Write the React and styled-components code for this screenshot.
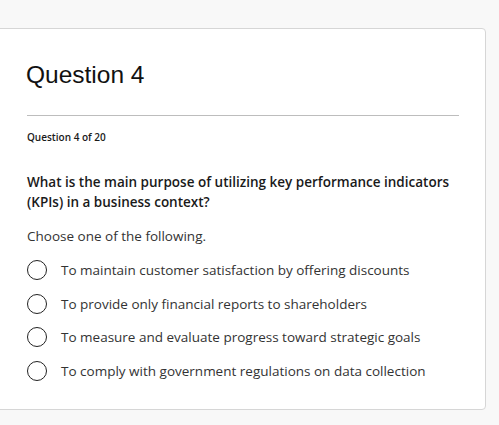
import React from 'react'
import styled, { createGlobalStyle } from 'styled-components'

const Global = createGlobalStyle`
  html, body {
    margin: 0;
    padding: 0;
    background: #f8f8f8;
  }
`

const Page = styled.div`
  width: 499px;
  height: 425px;
  padding-top: 28px;
  box-sizing: border-box;
`

const Card = styled.div`
  margin-left: -4px;
  width: 490px;
  height: 382px;
  box-sizing: border-box;
  background: #fff;
  border: 1px solid #d6d6d6;
  border-radius: 4px;
  padding: 0 26px 0 30px;
`

const Title = styled.h1`
  margin: 0 0 0 -1px;
  padding-top: 30px;
  font-family: 'Liberation Sans', Arial, sans-serif;
  font-weight: 400;
  font-size: 24.5px;
  line-height: 32px;
  color: #111;
`

const Divider = styled.hr`
  margin: 24px 0 0;
  border: none;
  border-top: 1px solid #bdbdbd;
`

const Counter = styled.div`
  margin-top: 13px;
  font-family: 'Open Sans', sans-serif;
  font-weight: 600;
  font-size: 10px;
  line-height: 16px;
  color: #1a1a1a;
`

const Prompt = styled.div`
  margin-top: 27px;
  font-family: 'Open Sans', sans-serif;
  font-weight: 600;
  font-size: 13.5px;
  line-height: 20px;
  color: #1a1a1a;
`

const Hint = styled.div`
  margin-top: 14px;
  font-family: 'Open Sans', sans-serif;
  font-size: 13.5px;
  line-height: 20px;
  color: #333;
`

const Options = styled.div`
  margin-top: 14px;
  display: flex;
  flex-direction: column;
  gap: 13.5px;
`

const Option = styled.label`
  display: flex;
  align-items: center;
  gap: 14px;
  height: 20px;
  font-family: 'Open Sans', sans-serif;
  font-size: 13.5px;
  color: #333;
  cursor: pointer;
`

const Radio = styled.span`
  width: 20px;
  height: 20px;
  box-sizing: border-box;
  border: 1.5px solid #222;
  border-radius: 50%;
  flex-shrink: 0;
`

const choices = [
  'To maintain customer satisfaction by offering discounts',
  'To provide only financial reports to shareholders',
  'To measure and evaluate progress toward strategic goals',
  'To comply with government regulations on data collection',
]

export default function App() {
  return (
    <Page>
      <Global />
      <Card>
        <Title>Question 4</Title>
        <Divider />
        <Counter>Question 4 of 20</Counter>
        <Prompt>
          What is the main purpose of utilizing key performance indicators
          (KPIs) in a business context?
        </Prompt>
        <Hint>Choose one of the following.</Hint>
        <Options>
          {choices.map(c => (
            <Option key={c}>
              <Radio />
              {c}
            </Option>
          ))}
        </Options>
      </Card>
    </Page>
  )
}
